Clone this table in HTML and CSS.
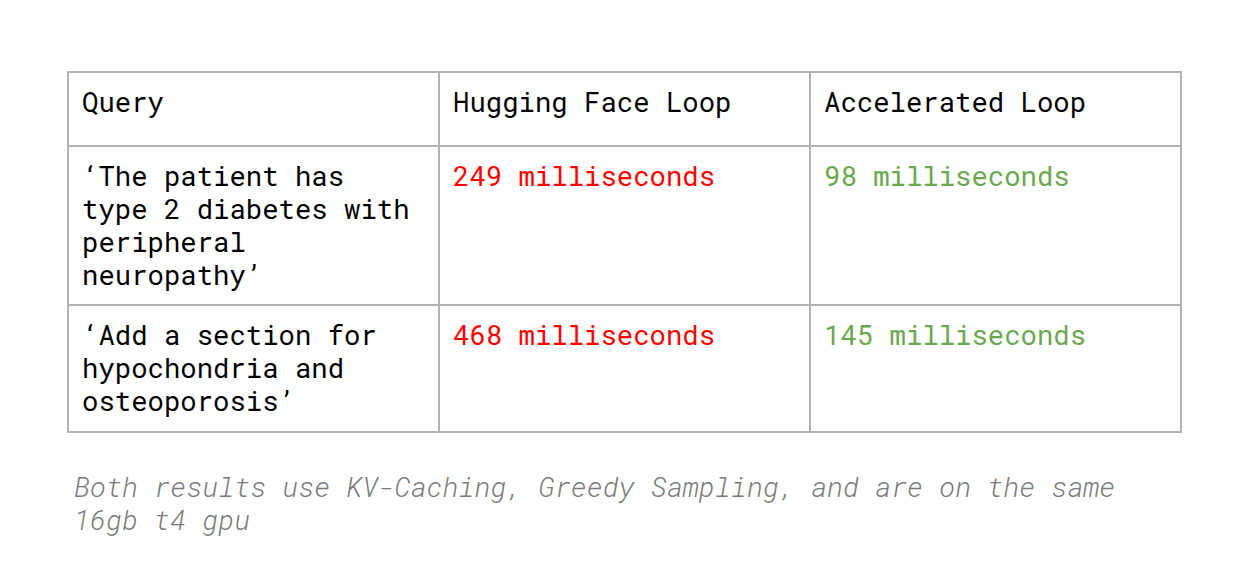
FILE: index.html
```html
<!DOCTYPE html>
<html>
<head>
<meta charset="utf-8">
<link rel="stylesheet" href="styles.css">
</head>
<body>
<div class="page">
  <table class="results">
    <colgroup>
      <col class="c1"><col class="c2"><col class="c3">
    </colgroup>
    <tr class="head">
      <td>Query</td>
      <td>Hugging Face Loop</td>
      <td>Accelerated Loop</td>
    </tr>
    <tr class="r1">
      <td>‘The patient has type 2 diabetes with peripheral neuropathy’</td>
      <td class="slow">249 milliseconds</td>
      <td class="fast">98 milliseconds</td>
    </tr>
    <tr class="r2">
      <td>‘Add a section for hypochondria and osteoporosis’</td>
      <td class="slow">468 milliseconds</td>
      <td class="fast">145 milliseconds</td>
    </tr>
  </table>
  <p class="caption">Both results use KV-Caching, Greedy Sampling, and are on the same 16gb t4 gpu</p>
</div>
</body>
</html>
```

FILE: styles.css
```css
html, body {
  margin: 0;
  padding: 0;
  background: #ffffff;
}
.page {
  padding: 71px 0 0 67px;
  font-family: "Roboto Mono", "Liberation Mono", "DejaVu Sans Mono", monospace;
  font-size: 27.3px;
  line-height: 33px;
  color: #000;
}
.results {
  border-collapse: collapse;
  table-layout: fixed;
  width: 1113px;
  border: 2px solid #b3b3b3;
}
.results col.c1 { width: 371px; }
.results col.c2 { width: 371px; }
.results col.c3 { width: 371px; }
.results td {
  border: 2px solid #b3b3b3;
  padding: 12px 15px 0 13px;
  vertical-align: top;
  word-wrap: break-word;
}
.results tr.head td {
  height: 74px;
  padding-top: 12px;
  box-sizing: border-box;
}
.results tr.r1 td {
  height: 159px;
  box-sizing: border-box;
}
.results tr.r2 td {
  height: 127px;
  box-sizing: border-box;
}
.slow { color: #ff0000; }
.fast { color: #6aa84f; }
.caption {
  margin: 37px 0 0 7px;
  width: 1110px;
  font-style: italic;
  font-weight: 300;
  color: #7a7a7a;
}
```
